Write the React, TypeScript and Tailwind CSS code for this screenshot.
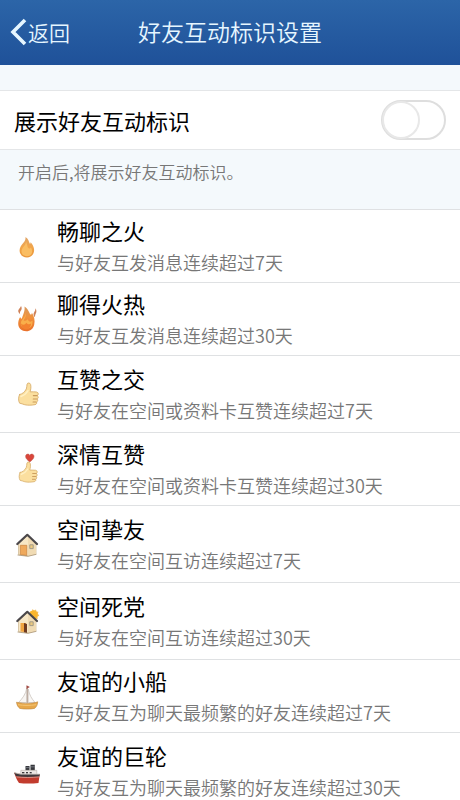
import { useState, type ReactNode } from "react";

function Flame({ hot = false }: { hot?: boolean }) {
  return hot ? (
    <svg viewBox="0 0 28 32" className="h-8 w-7" aria-hidden="true">
      <defs>
        <linearGradient id="hot" x1="0" y1="0" x2="0" y2="1">
          <stop offset="0" stopColor="#d99a5e" />
          <stop offset="0.45" stopColor="#f0913c" />
          <stop offset="1" stopColor="#e9702a" />
        </linearGradient>
      </defs>
      <path d="M11.500 3.500c3 1.800 4 4.300 5.500 7.500.9 1.200 1.700.6 1.900-1.300 2.300 3.700 3.300 7.800 2.300 12-1 4.200-4 6.500-7.900 6.500-4.600 0-8.100-3-8.100-7.500 0-2.400.6-4.600 2-6.700.4 1 .9 1.500 1.600 1.800C9.800 12 12.200 8.500 11.500 3.500z" fill="url(#hot)" />
      <path d="M12.800 9.500c.6 3.200-.6 5.500-2.200 7.700 1.500 1 3 .6 4.100-.9 1 2.600 3.200 3 4.800 1.300.5 4.800-1.700 8-5.400 8-3.600 0-6.300-2-6.300-5.200 0-4 4.700-5.200 5-10.900z" fill="#f9ae4a" />
      <path d="M8 20.500c2 2 4 1.300 5.500-.8 1 1.800 3 2 4.600.9-.3 3.700-2.200 5.800-4.700 5.800-2.800 0-5-2.200-5.400-5.900z" fill="#f3812f" />
      <path d="M8 2.800c1.200 2.400.7 4-.4 5.200-.8 1-.7 2-.5 3.200C4.900 9.600 4.700 7.700 6 6.100 6.900 5 7.700 4.100 8 2.800zM22.500 5.300c1.300 2.100 1 3.900.3 5.300-.7 1.200-.6 2.500-.9 3.700-1.700-1.900-1.700-3.700-.6-5.300.8-1.200 1.200-2.300 1.200-3.700z" fill="#cf8258" />
    </svg>
  ) : (
    <svg viewBox="0 0 28 32" className="h-8 w-7" aria-hidden="true">
      <defs>
        <linearGradient id="warm" x1="0" y1="0" x2="0" y2="1">
          <stop offset="0" stopColor="#dfa468" />
          <stop offset="0.5" stopColor="#f2a54a" />
          <stop offset="1" stopColor="#e9963a" />
        </linearGradient>
      </defs>
      <path d="M12.500 7c3 1.900 3.300 4.600 4.500 7 .4-.5.6-1.100.6-1.800 2.300 2.500 3.700 5.200 3.500 8.300-.3 4.200-3.300 7-7.100 7-4.200 0-7.400-2.800-7.400-6.900 0-3.400 1.900-5.200 3.800-7.800 1.400-1.900 2.300-3.400 2.100-5.800z" fill="url(#warm)" />
      <path d="M13 11.500c.2 4-4.500 5.600-4.500 10 0 2.800 2.400 4.700 5.400 4.700 2.900 0 5.200-1.800 5.200-4.800 0-1.500-.4-2.900-1.100-4-.6 1-1.500 1.300-2.400.8-1.500-.9-1-3.800-2.600-6.700z" fill="#fabd62" />
    </svg>
  );
}

function Thumb({ heart = false }: { heart?: boolean }) {
  return (
    <svg viewBox="0 0 28 32" className="h-8 w-7" aria-hidden="true">
      {heart && (
        <path d="M16.800 9c-2.200-1.900-4.200-3.300-4.200-5.500 0-2.700 3.200-3.200 4.200-1.100 1-2.100 4.200-1.600 4.200 1.100 0 2.200-2 3.600-4.200 5.500z" fill="#d9463b" stroke="#b9544a" strokeWidth="0.500" />
      )}
      <g transform={heart ? "translate(1 3.200) scale(0.920 0.950)" : "translate(0 -1.500) scale(1 1.050)"} strokeLinejoin="round" strokeLinecap="round">
        <path
          d="M6.600 17.200c2.700-.6 5-2.200 6.700-5.300.6-1.200.4-3 .8-4.700.4-1.400 3-1.400 3.500.4.600 2.300.2 4.800-.5 7 2 .1 4.800-.1 6.500.2 2.100.4 2.200 2.900.6 3.400 1.400.6 1.400 2.700-.1 3.200 1 .7.8 2.500-.6 2.900.6 1-.1 2.400-1.500 2.500-3.200.5-7.100.8-10.200.1-1.900-.4-3.200-1.300-5.200-1.500-1.300-2.300-1.400-5.700 0-8.200z"
          fill="#fbdf9f"
          stroke="#d9b06f"
          strokeWidth="0.900"
        />
        <path d="M24 18.200h-3.700M23.800 21.400h-3.600M23 24.300h-3" fill="none" stroke="#c99a5b" strokeWidth="1" />
        <path d="M8 19c3-1 5.500-3 7-5.500" fill="none" stroke="#fff0c4" strokeWidth="1.400" />
      </g>
    </svg>
  );
}

function House({ sun = false }: { sun?: boolean }) {
  return (
    <svg viewBox="0 0 28 32" className="h-8 w-7" aria-hidden="true">
      {sun && (
        <>
          <path d="M19.500 4l1.500 1.500 2-1 .5 2 2 .3-.7 2L26.300 10.500l-1.800 1.300.2 2.200-2.300-.3-1.400 1.800-6-4 .3-3.500 2 .2.300-2.200 1.500.2z" fill="#f3bd5a" />
          <circle cx="20.300" cy="9.800" r="4.300" fill="#fab62e" />
        </>
      )}
      <path d="M5.500 16L14.500 7.500l8.500 8.500v10l-8 2-9.500-1.300z" fill="#f7e7c6" stroke="#c5ab82" strokeWidth="0.600" />
      <path d="M15 9l8 7v10l-8 2z" fill="#f0dbb4" />
      {sun ? (
        <>
          <path d="M7.500 18h5.500v9.300l-5.500-.8z" fill="#f0a441" />
          <path d="M11 18l3 1v9l-3-.8z" fill="#6e3a20" />
        </>
      ) : (
        <path d="M7.300 17.300h6.500v10.200l-6.500-1z" fill="#efa95c" stroke="#c9823f" strokeWidth="0.700" />
      )}
      <path d="M16.800 16.800h3.400v3.800h-3.400z" fill="#ebc97f" stroke="#9c9688" strokeWidth="0.900" />
      <path d="M4.300 16L14.300 6.800l9.700 9.200" fill="none" stroke="#4b484b" strokeWidth="2.200" strokeLinejoin="round" strokeLinecap="round" />
      <path d="M4.500 27l10.500 1.300 8.500-2" fill="none" stroke="#a58f70" strokeWidth="0.700" />
    </svg>
  );
}

function Sailboat() {
  return (
    <svg viewBox="0 0 28 32" className="h-8 w-7" aria-hidden="true">
      <path d="M13.800 8C13 14 9 19 5.500 22.500h8.300z" fill="#f8f5f2" stroke="#ccc4be" strokeWidth="0.800" />
      <path d="M15.200 9c1 6 3.800 10 6.800 13.500h-6.800z" fill="#f9f7f5" stroke="#ccc4be" strokeWidth="0.800" />
      <path d="M14.300 6v17" stroke="#ab9789" strokeWidth="0.900" />
      <path d="M13.500 5.300l3.300 1.600-3.300 2z" fill="#a34c46" />
      <path d="M3.500 22.200c4 1 8 1.200 11.500 1.200 3.300 0 6.500-.4 9.700-1.600-.2 3.200-1.300 5.400-3.200 6.600-4.500.9-10 .9-14.700 0-1.800-1.300-2.900-3.300-3.300-6.200z" fill="#e7a749" stroke="#bc843d" strokeWidth="0.600" />
      <path d="M5 24.700c6 1 12 1 18.300 0" fill="none" stroke="#f4c574" strokeWidth="1" />
    </svg>
  );
}

function Steamship() {
  return (
    <svg viewBox="0 0 28 32" className="h-8 w-7" aria-hidden="true">
      <path d="M12.500 11h4v4.500h-4zM17.500 9.800h4.300v5.700h-4.300z" fill="#37383d" />
      <path d="M12.500 12.600h4M17.500 11.800h4.300" stroke="#8b8f98" strokeWidth="0.700" />
      <path d="M7.800 15.300h16v4.200h-16z" fill="#ece8e4" stroke="#aaa19b" strokeWidth="0.500" />
      <path d="M9 17.700h2.400M13 17.700h2M16.700 17.700h2" stroke="#3c3a3d" strokeWidth="1.500" />
      <path d="M1 17.500l6.500 1.500h19.300l-1.300 9c-6.500.8-14 .8-19.500 0C3.500 25 2.500 21 1 17.500z" fill="#c23c2e" />
      <path d="M1 17.500l6.500 1.500h19.300l-.4 2.500c-8 .7-16.400.7-23.200-.2z" fill="#403a3d" />
      <path d="M1 17.500l6.500 1.600h19.300" fill="none" stroke="#d6cfca" strokeWidth="0.900" />
      <path d="M3.300 21.900c7 .8 15 .8 23 0" fill="none" stroke="#ddb3a9" strokeWidth="0.700" />
    </svg>
  );
}

type Badge = { name: string; rule: string; icon: ReactNode; roomy?: boolean };

const badges: Badge[] = [
  { name: "畅聊之火", rule: "与好友互发消息连续超过7天", icon: <Flame /> },
  { name: "聊得火热", rule: "与好友互发消息连续超过30天", icon: <Flame hot /> },
  { name: "互赞之交", rule: "与好友在空间或资料卡互赞连续超过7天", icon: <Thumb />, roomy: true },
  { name: "深情互赞", rule: "与好友在空间或资料卡互赞连续超过30天", icon: <Thumb heart /> },
  { name: "空间挚友", rule: "与好友在空间互访连续超过7天", icon: <House />, roomy: true },
  { name: "空间死党", rule: "与好友在空间互访连续超过30天", icon: <House sun />, roomy: true },
  { name: "友谊的小船", rule: "与好友互为聊天最频繁的好友连续超过7天", icon: <Sailboat /> },
  { name: "友谊的巨轮", rule: "与好友互为聊天最频繁的好友连续超过30天", icon: <Steamship />, roomy: true },
];

export default function App() {
  const [shown, setShown] = useState(false);

  return (
    <div className="h-screen overflow-hidden bg-white font-['Noto_Sans_CJK_SC',sans-serif] text-black">
      <header className="grid grid-cols-[1fr_auto_1fr] items-center bg-linear-to-b from-[#2c65a8] to-[#1f5199] pt-[15px] pb-[17px] text-[#e6f6ff]">
        <button type="button" className="flex items-center pl-2.5 text-[21px] leading-8 font-[350]">
          <svg viewBox="0 0 18 28" className="h-7 w-[18px]" fill="none" stroke="currentColor" strokeWidth="3.600" aria-hidden="true">
            <path d="M15 2L3 14l12 12" />
          </svg>
          返回
        </button>
        <h1 className="text-[23px] leading-[33px] font-[350]">好友互动标识设置</h1>
      </header>

      <main>
        <div className="h-[25px] bg-[#f4f9fc]" />
        <label className="flex items-center justify-between border-y border-[#e4e6e8] px-3.5 text-[22px] leading-[58px]">
          展示好友互动标识
          <span className="relative flex">
            <input
              type="checkbox"
              role="switch"
              checked={shown}
              onChange={(e) => setShown(e.target.checked)}
              className="peer h-10 w-[65px] appearance-none rounded-full border-2 border-[#dedede] bg-white checked:border-[#4cd964] checked:bg-[#4cd964]"
            />
            <span className="pointer-events-none absolute top-px left-px size-[38px] rounded-full border-2 border-[#e8e8e8] bg-white peer-checked:left-[26px]" />
          </span>
        </label>
        <p className="bg-[#f4f9fc] px-[18px] pt-1.5 pb-[22px] text-[17px] leading-[31px] font-[350] text-[#777777]">
          开启后,将展示好友互动标识。
        </p>

        <ul>
          {badges.map((badge) => (
            <li
              key={badge.name}
              className={`flex items-center gap-4 border-t border-[#dfe1e3] pl-[13px] ${badge.roomy ? "py-[7px]" : "py-[5px]"}`}
            >
              {badge.icon}
              <div className="flex flex-col gap-0.5">
                <h2 className="text-[22px] leading-[30px]">{badge.name}</h2>
                <p className="text-lg leading-[30px] font-[350] text-[#777777]">{badge.rule}</p>
              </div>
            </li>
          ))}
        </ul>
      </main>
    </div>
  );
}
